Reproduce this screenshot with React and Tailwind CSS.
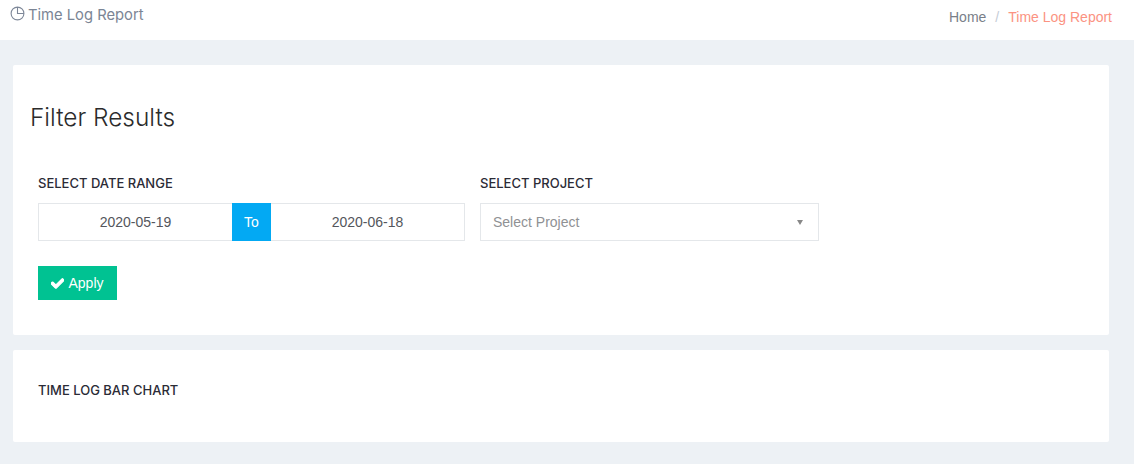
import React from "react";
import { FaCheck } from "react-icons/fa";

function ClockIcon() {
  return (
    <svg width="15" height="15" viewBox="0 0 15 15" fill="none" stroke="#7d8798" strokeWidth="1.1" className="shrink-0">
      <circle cx="7.5" cy="7.5" r="6.4" />
      <path d="M7.5 1.1v6.4h6.4" />
    </svg>
  );
}

export default function App() {
  return (
    <div className="w-[1134px] h-[464px] overflow-hidden bg-[#edf1f5] font-['Liberation_Sans',sans-serif]">
      <header className="h-[40px] bg-white flex justify-between pl-[10px] pr-[22px]">
        <div className="flex items-start gap-[3px] pt-[6px]">
          <ClockIcon />
          <span className="font-['Inter',sans-serif] text-[14.75px] leading-[18px] font-normal text-[#7b8595]">Time Log Report</span>
        </div>
        <nav className="flex items-start pt-[9px] text-[14px] leading-[16px]">
          <span className="text-[#797f89]">Home</span>
          <span className="text-[#c5ccd6] px-[9px]">/</span>
          <span className="text-[#fb9382]">Time Log Report</span>
        </nav>
      </header>

      <main className="px-[13px] w-[1122px] pt-[25px] flex flex-col gap-[15px]">
        <section className="h-[270px] bg-white rounded-[2px] pt-[37px] pl-[17px]">
          <h1 className="font-['Inter',sans-serif] text-[24.4px] leading-[30px] font-light text-[#2b2b2b]">Filter Results</h1>
          <div className="flex gap-[15px] pl-[8px] mt-[42px]">
            <div className="w-[427px]">
              <label className="block font-['Inter',sans-serif] text-[13px] leading-[18px] font-medium text-[#2b2b36] mb-[11px]">SELECT DATE RANGE</label>
              <div className="flex h-[38px] text-[14px] text-[#54565c]">
                <div className="flex-1 border border-[#e4e7ea] border-r-0 flex items-center justify-center">2020-05-19</div>
                <div className="w-[39px] bg-[#03a9f3] text-white flex items-center justify-center">To</div>
                <div className="flex-1 border border-[#e4e7ea] border-l-0 flex items-center justify-center">2020-06-18</div>
              </div>
            </div>
            <div className="w-[339px]">
              <label className="block font-['Inter',sans-serif] text-[13px] leading-[18px] font-medium text-[#2b2b36] mb-[11px]">SELECT PROJECT</label>
              <div className="h-[38px] border border-[#e4e7ea] flex items-center justify-between pl-[12px] pr-[15px] text-[14px] text-[#8f9194]">
                <span>Select Project</span>
                <span className="w-0 h-0 border-x-[3.5px] border-x-transparent border-t-[5px] border-t-[#888888]" />
              </div>
            </div>
          </div>
          <button className="ml-[8px] mt-[25px] w-[79px] h-[34px] bg-[#00c292] text-white text-[14px] flex items-center justify-center gap-[4px]">
            <FaCheck className="w-[13px] h-[13px]" stroke="currentColor" strokeWidth="40" />
            Apply
          </button>
        </section>

        <section className="h-[92px] bg-white rounded-[2px] pl-[25px] pt-[31px]">
          <h2 className="font-['Inter',sans-serif] text-[13px] leading-[18px] font-medium text-[#2b2b36]">TIME LOG BAR CHART</h2>
        </section>
      </main>
    </div>
  );
}
